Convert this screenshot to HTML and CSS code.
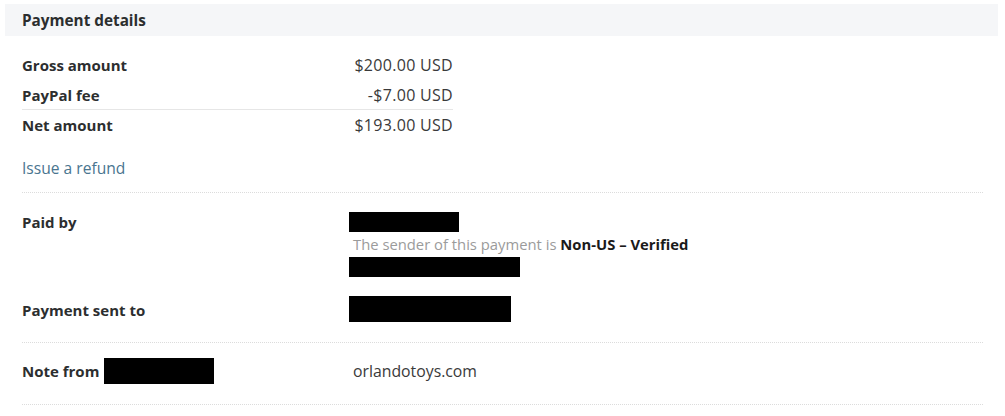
FILE: index.html
```html
<!DOCTYPE html>
<html>
<head>
<meta charset="utf-8">
<link rel="stylesheet" href="styles.css">
</head>
<body>
<div class="panel">
  <div class="panel-head">Payment details</div>
  <div class="panel-body">
    <div class="amounts">
      <div class="amount-row"><span class="label">Gross amount</span><span class="money">$200.00 USD</span></div>
      <div class="amount-row fee"><span class="label">PayPal fee</span><span class="money">-$7.00 USD</span></div>
      <div class="amount-row"><span class="label">Net amount</span><span class="money">$193.00 USD</span></div>
    </div>
    <div class="refund"><a class="link" href="#">Issue a refund</a></div>
    <div class="section parties">
      <div class="row">
        <div class="label">Paid by</div>
        <div class="value">
          <span class="redact r1"></span>
          <div class="sender">The sender of this payment is <b>Non-US – Verified</b></div>
          <span class="redact r2"></span>
        </div>
      </div>
      <div class="row">
        <div class="label tall">Payment sent to</div>
        <div class="value"><span class="redact r3"></span></div>
      </div>
    </div>
    <div class="section note">
      <div class="row">
        <div class="label note-label">Note from <span class="redact r4"></span></div>
        <div class="value note-text">orlandotoys.com</div>
      </div>
    </div>
  </div>
</div>
</body>
</html>
```
FILE: styles.css
```css
html, body {
  margin: 0;
  padding: 0;
  background: #fff;
}
body {
  padding-top: 4px;
  font-family: "Open Sans", "Noto Sans", "Liberation Sans", sans-serif;
  font-size: 15px;
  color: #2c2e2f;
}
.panel {
  margin-left: 5px;
  width: 993px;
}
.panel-head {
  height: 32px;
  line-height: 32px;
  padding-left: 17px;
  background: #f5f6f8;
  font-weight: 700;
  color: #2c2e2f;
  font-size: 15.3px;
}
.panel-body {
  padding: 14px 15px 0 17px;
}
.amounts {
  width: 431px;
}
.amount-row {
  display: flex;
  justify-content: space-between;
  height: 30px;
  line-height: 30px;
}
.amount-row.fee {
  border-bottom: 1px solid #e6e6e6;
  height: 29px;
}
.label {
  font-weight: 700;
}
.money {
  color: #3a3a3a;
  font-size: 16px;
  letter-spacing: 0.3px;
}
.refund {
  margin-top: 13px;
  height: 30px;
  line-height: 30px;
  padding-bottom: 9px;
  border-bottom: 1px dotted #dcdcdc;
  font-size: 15.6px;
}
.link {
  color: #4a7590;
  text-decoration: none;
}
.section {
  border-bottom: 1px dotted #dcdcdc;
}
.parties {
  padding: 19px 0 19px;
  display: flex;
  flex-direction: column;
  gap: 19px;
}
.row {
  display: grid;
  grid-template-columns: 327px 1fr;
}
.row .label {
  line-height: 20px;
}
.row .label.tall {
  line-height: 26px;
  padding-top: 1px;
}
.value {
  display: flex;
  flex-direction: column;
  align-items: flex-start;
}
.redact {
  display: inline-block;
  background: #000;
}
.r1 { width: 110px; height: 20px; }
.r2 { width: 171px; height: 20px; }
.r3 { width: 162px; height: 26px; }
.r4 { width: 110px; height: 26px; vertical-align: middle; }
.sender {
  line-height: 25px;
  padding-left: 4px;
  color: #9b9b9b;
  font-size: 14.8px;
}
.sender b {
  color: #1a1a1a;
  font-weight: 700;
}
.note {
  padding: 15px 0 20px;
}
.note-label {
  display: flex;
  align-items: center;
  gap: 5px;
  line-height: 26px !important;
}
.note-text {
  padding-left: 4px;
  line-height: 26px;
  color: #3a3a3a;
  font-size: 15.8px;
}
```
